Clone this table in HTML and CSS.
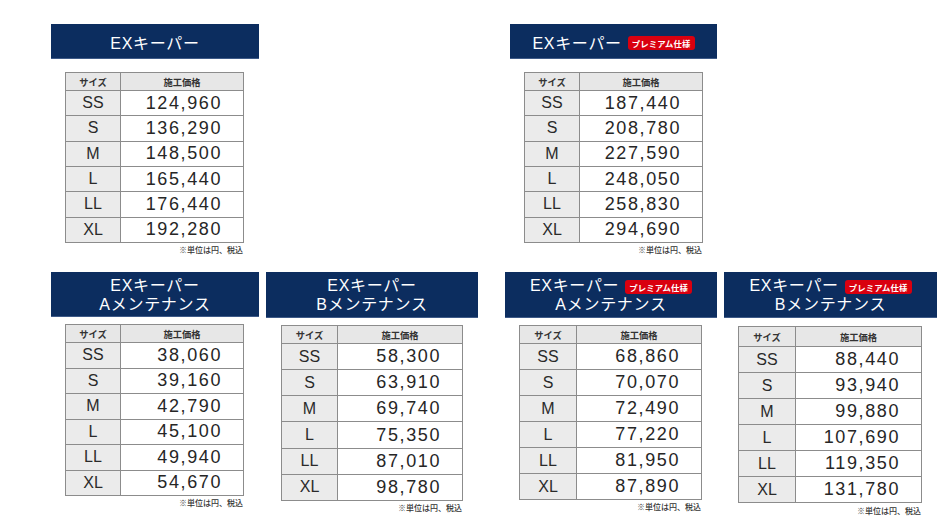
FILE: index.html
```html
<!DOCTYPE html>
<html lang="ja">
<head>
<meta charset="utf-8">
<title>EXキーパー 施工価格</title>
<link rel="stylesheet" href="styles.css">
</head>
<body>
<div class="page">
  <div class="row row-top">
    <section class="panel p1">
      <h2 class="title single"><span class="line">EXキーパー</span></h2>
      <div class="panel-body">
        <div class="price-table">
          <div class="cell head">サイズ</div><div class="cell head">施工価格</div>
          <div class="cell size">SS</div><div class="cell price">124,960</div>
          <div class="cell size">S</div><div class="cell price">136,290</div>
          <div class="cell size">M</div><div class="cell price">148,500</div>
          <div class="cell size">L</div><div class="cell price">165,440</div>
          <div class="cell size">LL</div><div class="cell price">176,440</div>
          <div class="cell size">XL</div><div class="cell price">192,280</div>
        </div>
        <p class="note">※単位は円、税込</p>
      </div>
    </section>
    <section class="panel p2">
      <h2 class="title single"><span class="line">EXキーパー<span class="badge">プレミアム仕様</span></span></h2>
      <div class="panel-body">
        <div class="price-table">
          <div class="cell head">サイズ</div><div class="cell head">施工価格</div>
          <div class="cell size">SS</div><div class="cell price">187,440</div>
          <div class="cell size">S</div><div class="cell price">208,780</div>
          <div class="cell size">M</div><div class="cell price">227,590</div>
          <div class="cell size">L</div><div class="cell price">248,050</div>
          <div class="cell size">LL</div><div class="cell price">258,830</div>
          <div class="cell size">XL</div><div class="cell price">294,690</div>
        </div>
        <p class="note">※単位は円、税込</p>
      </div>
    </section>
  </div>
  <div class="row row-bottom">
    <section class="panel p3">
      <h2 class="title double"><span class="line">EXキーパー</span><span class="line">Aメンテナンス</span></h2>
      <div class="panel-body">
        <div class="price-table">
          <div class="cell head">サイズ</div><div class="cell head">施工価格</div>
          <div class="cell size">SS</div><div class="cell price">38,060</div>
          <div class="cell size">S</div><div class="cell price">39,160</div>
          <div class="cell size">M</div><div class="cell price">42,790</div>
          <div class="cell size">L</div><div class="cell price">45,100</div>
          <div class="cell size">LL</div><div class="cell price">49,940</div>
          <div class="cell size">XL</div><div class="cell price">54,670</div>
        </div>
        <p class="note">※単位は円、税込</p>
      </div>
    </section>
    <section class="panel p4">
      <h2 class="title double"><span class="line">EXキーパー</span><span class="line">Bメンテナンス</span></h2>
      <div class="panel-body">
        <div class="price-table">
          <div class="cell head">サイズ</div><div class="cell head">施工価格</div>
          <div class="cell size">SS</div><div class="cell price">58,300</div>
          <div class="cell size">S</div><div class="cell price">63,910</div>
          <div class="cell size">M</div><div class="cell price">69,740</div>
          <div class="cell size">L</div><div class="cell price">75,350</div>
          <div class="cell size">LL</div><div class="cell price">87,010</div>
          <div class="cell size">XL</div><div class="cell price">98,780</div>
        </div>
        <p class="note">※単位は円、税込</p>
      </div>
    </section>
    <section class="panel p5">
      <h2 class="title double"><span class="line">EXキーパー<span class="badge">プレミアム仕様</span></span><span class="line">Aメンテナンス</span></h2>
      <div class="panel-body">
        <div class="price-table">
          <div class="cell head">サイズ</div><div class="cell head">施工価格</div>
          <div class="cell size">SS</div><div class="cell price">68,860</div>
          <div class="cell size">S</div><div class="cell price">70,070</div>
          <div class="cell size">M</div><div class="cell price">72,490</div>
          <div class="cell size">L</div><div class="cell price">77,220</div>
          <div class="cell size">LL</div><div class="cell price">81,950</div>
          <div class="cell size">XL</div><div class="cell price">87,890</div>
        </div>
        <p class="note">※単位は円、税込</p>
      </div>
    </section>
    <section class="panel p6">
      <h2 class="title double"><span class="line">EXキーパー<span class="badge">プレミアム仕様</span></span><span class="line">Bメンテナンス</span></h2>
      <div class="panel-body">
        <div class="price-table">
          <div class="cell head">サイズ</div><div class="cell head">施工価格</div>
          <div class="cell size">SS</div><div class="cell price">88,440</div>
          <div class="cell size">S</div><div class="cell price">93,940</div>
          <div class="cell size">M</div><div class="cell price">99,880</div>
          <div class="cell size">L</div><div class="cell price">107,690</div>
          <div class="cell size">LL</div><div class="cell price">119,350</div>
          <div class="cell size">XL</div><div class="cell price">131,780</div>
        </div>
        <p class="note">※単位は円、税込</p>
      </div>
    </section>
  </div>
</div>
</body>
</html>
```

FILE: styles.css
```css
html, body {
  margin: 0;
  padding: 0;
  background: #ffffff;
}

body {
  font-family: "Liberation Sans", "Noto Sans CJK JP", sans-serif;
  color: #2a2a2a;
}

.page {
  width: 947px;
  height: 523px;
  box-sizing: border-box;
  padding-top: 24px;
  overflow: hidden;
}

.row {
  display: flex;
  align-items: flex-start;
  padding-left: 51px;
}

.row-top {
  height: 248px;
}

.panel {
  display: flex;
  flex-direction: column;
  --c1: 54px;
  --c2: 122px;
  --hr: 17px;
  --r: 24.33px;
  --mt: 13px;
  --ml: 14px;
}

.title {
  margin: 0;
  box-sizing: border-box;
  background: #0c2d5f;
  border-bottom: 1px solid #3e5a88;
  color: #ffffff;
  font-family: "Liberation Sans", "Noto Sans CJK JP", sans-serif;
  font-weight: 400;
  font-size: 16px;
  letter-spacing: 0.7px;
  display: flex;
  flex-direction: column;
  align-items: center;
  justify-content: center;
}

.title.single {
  height: 35px;
  padding-top: 1px;
}

.title.double {
  height: 46px;
  line-height: 19px;
  padding-top: 1px;
}

.line {
  display: flex;
  align-items: center;
  white-space: nowrap;
}

.badge {
  display: inline-flex;
  align-items: center;
  height: 14px;
  margin-left: 6px;
  margin-top: 2px;
  padding: 0 4px;
  border-radius: 3px;
  background: #d9000f;
  color: #ffffff;
  font-family: "Noto Sans CJK JP", sans-serif;
  font-weight: 700;
  font-size: 8.4px;
  letter-spacing: 0.1px;
  line-height: 14px;
}

.panel-body {
  display: flex;
  flex-direction: column;
  align-items: flex-end;
  align-self: flex-start;
  margin-left: var(--ml);
  margin-top: var(--mt);
}

.price-table {
  display: grid;
  grid-template-columns: var(--c1) var(--c2);
  grid-template-rows: var(--hr) repeat(6, var(--r));
  gap: 1px;
  background: #8c8c8c;
  border: 1px solid #8c8c8c;
}

.cell {
  display: flex;
  align-items: center;
  justify-content: center;
  white-space: nowrap;
}

.head {
  background: #e7e7e7;
  font-family: "Noto Sans CJK JP", sans-serif;
  font-size: 9.3px;
  font-weight: 700;
  color: #333333;
}

.size {
  background: #ebebeb;
  font-size: 16px;
  color: #2a2a2a;
}

.price {
  background: #ffffff;
  justify-content: flex-end;
  padding-right: 21px;
  font-size: 18px;
  letter-spacing: 1.6px;
  color: #262626;
}

.note {
  margin: 2px 0 0;
  padding-right: 1px;
  font-family: "Noto Sans CJK JP", sans-serif;
  font-size: 8px;
  line-height: 10px;
  font-weight: 500;
  color: #333333;
  white-space: nowrap;
}

/* individual panels */
.p1 { width: 208px; }
.p2 { width: 207px; margin-left: 251px; }

.p3 {
  width: 208px;
  --mt: 7px;
  --r: 24.5px;
}
.p3 .title.double { height: 45px; }

.p4 {
  width: 212px;
  margin-left: 7px;
  --mt: 7px;
  --ml: 15px;
  --c1: 55px;
  --c2: 124px;
  --r: 25.17px;
}

.p5 {
  width: 212px;
  margin-left: 27px;
  --mt: 7px;
  --c1: 56px;
  --c2: 124px;
  --r: 25px;
}

.p6 {
  width: 213px;
  margin-left: 7px;
  --mt: 8px;
  --c1: 56px;
  --c2: 125px;
  --hr: 19px;
  --r: 25px;
}
.p6 .note { margin-top: 3px; }
```
